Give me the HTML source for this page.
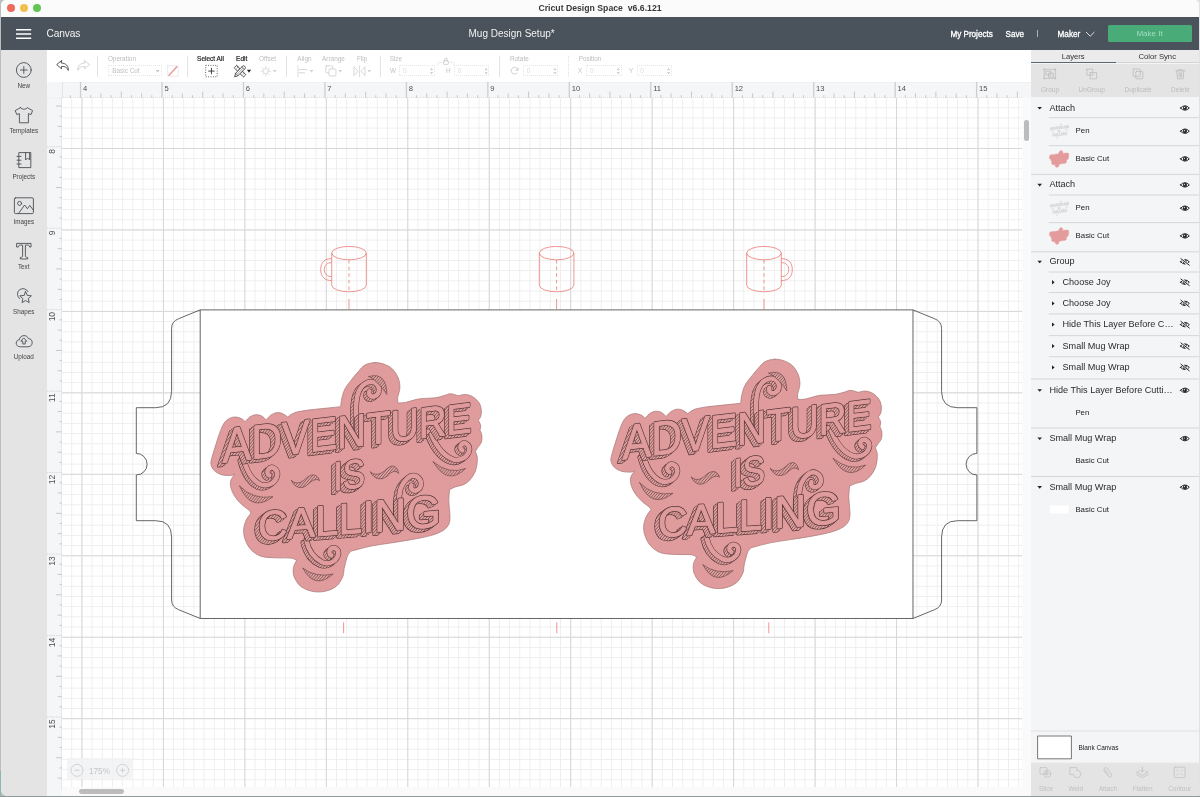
<!DOCTYPE html>
<html lang="en">
<head>
<meta charset="utf-8">
<title>Cricut Design Space v6.6.121</title>
<style>
*{box-sizing:border-box;margin:0;padding:0}
html,body{width:1200px;height:797px;overflow:hidden}
body{background:linear-gradient(to right,#bdbdbd 0,#bdbdbd 600px,#e2e2e2 600px);font-family:"Liberation Sans",sans-serif;position:relative;color:#333}
#win{will-change:transform;position:absolute;left:1px;top:0;width:1198px;height:796px;background:#fff;border-radius:5px 5px 7px 7px;overflow:hidden}
#win *{position:absolute}
.abs{position:absolute}
#titlebar{left:0;top:0;width:1198px;height:17px;background:#fbfbfb}
#titlebar .t{left:0;width:1198px;top:3px;text-align:center;font-size:8.7px;font-weight:bold;color:#3a3a3a;letter-spacing:0;white-space:pre}
.tl{width:8.2px;height:8.2px;border-radius:50%;top:4.1px}
#header{left:0;top:17px;width:1198px;height:32.6px;background:#4a535b}
#header .hx{color:#fff;white-space:nowrap}
#sidebar{left:0;top:49.6px;width:45.5px;height:747px;background:#e4e4e4}
.sbl{left:0;width:45.5px;text-align:center;font-size:6.3px;color:#444;white-space:nowrap}
#toolbar{left:45.5px;top:49.6px;width:985px;height:32.2px;background:#fff}
.tbl{font-size:6.4px;color:#bdbdbd;white-space:nowrap;top:5.4px}
.tbl.dk{color:#222;font-size:6.5px;-webkit-text-stroke:0.2px #222}
.div{width:1px;background:#e3e3e3;top:6px;height:21px}
.inp{height:10.5px;top:15.8px;border:1px dotted #e6e6e6;border-radius:1px}
.sm{font-size:6.4px;color:#c4c4c4;white-space:nowrap}
</style>
</head>
<body>
<div id="win">
<div id="titlebar">
  <div class="tl" style="left:5.5px;background:#ec6a5e"></div>
  <div class="tl" style="left:18.5px;background:#f4bf4f"></div>
  <div class="tl" style="left:31.5px;background:#61c554"></div>
  <div class="t">Cricut Design Space  v6.6.121</div>
</div>
<div id="header">
  <svg style="left:15px;top:11px" width="16" height="12" viewBox="0 0 16 12"><path d="M0 1.8H15.2M0 6H15.2M0 10.2H15.2" stroke="#fff" stroke-width="1.4" fill="none"/></svg>
  <div class="hx" style="left:45.6px;top:11.1px;font-size:10.2px;opacity:.92;letter-spacing:-0.15px">Canvas</div>
  <div class="hx" style="left:467.5px;top:11.3px;font-size:10px;opacity:.92">Mug Design Setup*</div>
  <div class="hx" style="left:949.4px;top:13.2px;font-size:8.15px;line-height:9px;-webkit-text-stroke:0.3px #fff">My Projects</div>
  <div class="hx" style="left:1004.6px;top:13.2px;font-size:8.15px;line-height:9px;-webkit-text-stroke:0.3px #fff">Save</div>
  <div class="hx" style="left:1035.6px;top:11px;font-size:8px;opacity:.8">|</div>
  <div class="hx" style="left:1056.6px;top:13.2px;font-size:8.15px;line-height:9px;-webkit-text-stroke:0.3px #fff">Maker</div>
  <svg style="left:1084px;top:14px" width="11" height="7" viewBox="0 0 11 7"><path d="M1 1L5.2 5.2L9.4 1" stroke="#fff" stroke-width="0.9" fill="none" opacity=".9"/></svg>
  <div style="left:1106.5px;top:8px;width:84px;height:16.6px;background:#48ab78;border-radius:1.5px"></div>
  <div class="hx" style="left:1106.5px;top:11.6px;width:84px;text-align:center;font-size:8px;color:#a5dcc0">Make It</div>
</div>
<div id="sidebar">
  <svg style="left:0;top:0" width="46" height="320" viewBox="0 49.6 46 320" fill="none" stroke="#4a4f55" stroke-width="0.9" stroke-linejoin="round" stroke-linecap="round">
    <!-- New -->
    <circle cx="22.8" cy="69.6" r="7.4"/>
    <path d="M19.4 69.6H26.2M22.8 66.2V73"/>
    <!-- Templates (t-shirt) -->
    <path d="M19.6 107.2 L14.2 110.2 L15.8 114.2 L18.4 113.2 L18.4 122.4 L27.4 122.4 L27.4 113.2 L30 114.2 L31.6 110.2 L26.2 107.2 C25.4 109.4 20.4 109.4 19.6 107.2Z"/>
    <!-- Projects (notebook) -->
    <path d="M18.2 152.2H29.8V167.2H18.2Z"/>
    <path d="M16 156H20M16 159.8H20M16 163.6H20"/>
    <path d="M24.6 152.2V159.6L26.6 157.6L28.6 159.6V152.2"/>
    <!-- Images -->
    <rect x="13.4" y="197.4" width="19" height="15.8" rx="1.2"/>
    <circle cx="18.6" cy="203" r="2"/>
    <path d="M17.6 213 L23.6 204.6 L26.4 208.4 L28.8 205 L32.2 209.6"/>
    <!-- Text -->
    <path d="M16 243 H30 V246.6 H28.6 C28.4 245.2 27.8 244.6 26.4 244.6 H24.4 V255.4 C24.4 256.6 25 257 26.6 257 V258.6 H19.4 V257 C21 257 21.6 256.6 21.6 255.4 V244.6 H19.6 C18.2 244.6 17.6 245.2 17.4 246.6 H16Z"/>
    <!-- Shapes -->
    <path d="M18.6 298.2 A5.6 5.6 0 1 1 27 291.2"/>
    <path d="M24.6 291.2 L26.3 295 L30.4 295.4 L27.3 298.2 L28.2 302.2 L24.6 300.1 L21 302.2 L21.9 298.2 L18.8 295.4 L22.9 295Z"/>
    <!-- Upload -->
    <path d="M19.2 346.4 C16.6 346.4 15.2 344.8 15.2 342.8 C15.2 340.8 16.6 339.4 18.4 339.4 C18.6 336.8 20.6 335.2 23 335.2 C25.2 335.2 26.8 336.4 27.4 338.2 C29.6 338.2 31.2 339.8 31.2 342.2 C31.2 344.6 29.6 346.4 27.4 346.4Z"/>
    <path d="M23 337.8 L25.8 340.8 H24.2 V343.6 H21.8 V340.8 H20.2Z"/>
  </svg>
  <div class="sbl" style="top:32.7px">New</div>
  <div class="sbl" style="top:77.9px">Templates</div>
  <div class="sbl" style="top:123.1px">Projects</div>
  <div class="sbl" style="top:168.3px">Images</div>
  <div class="sbl" style="top:213.5px">Text</div>
  <div class="sbl" style="top:258.7px">Shapes</div>
  <div class="sbl" style="top:303.9px">Upload</div>
</div>
<div id="toolbar">
  <!-- coordinates inside toolbar: x = page-46.5, y = page-49.6 -->
  <svg style="left:0;top:0" width="985" height="32.2" viewBox="46.5 49.6 985 32.2" fill="none" stroke-linejoin="round" stroke-linecap="round">
    <!-- undo -->
    <path d="M60.8 60.2 L56 64.2 L60.8 68.4 V66 C64.2 65.8 66.4 67 67.6 70 C68 65.8 65.4 62.8 60.8 62.6Z" stroke="#444" stroke-width="0.9"/>
    <!-- redo -->
    <path d="M84 60.2 L88.8 64.2 L84 68.4 V66 C80.6 65.8 78.4 67 77.2 70 C76.8 65.8 79.4 62.8 84 62.6Z" stroke="#cdcdcd" stroke-width="0.9"/>
    <!-- swatch -->
    <rect x="167" y="65.4" width="10.6" height="10.4" stroke="#e2e2e2" stroke-width="0.8" stroke-dasharray="1 1"/>
    <path d="M168.4 74.8 L176.2 66.4" stroke="#ee9c9c" stroke-width="1.6"/>
    <!-- select all -->
    <rect x="205" y="65" width="11.6" height="11.4" stroke="#4a4a4a" stroke-width="0.9" stroke-dasharray="0.9 1.5" stroke-linecap="butt"/>
    <path d="M208 70.7H213.6M210.8 67.9V73.5" stroke="#333" stroke-width="0.9"/>
    <!-- edit (pencil + ruler crossed) -->
    <g stroke="#333" stroke-width="0.8" fill="#fff">
      <g transform="translate(239.4 70.8) rotate(45)"><rect x="-6.6" y="-1.7" width="13.2" height="3.4" rx="0.6"/><path d="M-4.4 -1.7V0M-2.2 -1.7V0M0 -1.7V0M2.2 -1.7V0M4.4 -1.7V0" stroke-width="0.5"/></g>
      <g transform="translate(239.4 70.8) rotate(-45)"><path d="M-7.4 0 L-4.6 -1.7 H5.4 Q6.8 -1.7 6.8 0 Q6.8 1.7 5.4 1.7 H-4.6Z"/><path d="M-4.6 -1.7V1.7M4.4 -1.7V1.7" stroke-width="0.5"/><path d="M-4.6 0H4.4" stroke-width="0.45"/></g>
    </g>
    <path d="M246.3 69.4 H250.5 L248.4 72.4Z" fill="#222" stroke="none"/>
    <!-- offset -->
    <g stroke="#d2d2d2" stroke-width="0.8">
      <circle cx="265.2" cy="70.8" r="2.6"/>
      <path d="M265.2 66V67.2M265.2 74.4V75.6M260.4 70.8H261.6M268.8 70.8H270M261.8 67.4L262.6 68.2M267.8 73.4L268.6 74.2M261.8 74.2L262.6 73.4M267.8 68.2L268.6 67.4" />
    </g>
    <path d="M272.4 69.6 H276 L274.2 72.2Z" fill="#d0d0d0"/>
    <!-- align -->
    <g stroke="#d4d4d4" stroke-width="0.9">
      <path d="M297.4 65.4V76.2" stroke-dasharray="1 1"/>
      <path d="M298.6 69.2H306.4M298.6 72.4H304"/>
    </g>
    <path d="M309.2 69.6 H312.8 L311 72.2Z" fill="#d0d0d0"/>
    <!-- arrange -->
    <g stroke="#d4d4d4" stroke-width="0.9">
      <rect x="325.2" y="65.4" width="7" height="7" rx="1"/>
      <rect x="328.4" y="68.6" width="7" height="7" rx="1" fill="#fff"/>
    </g>
    <path d="M337.8 69.6 H341.4 L339.6 72.2Z" fill="#d0d0d0"/>
    <!-- flip -->
    <g stroke="#d4d4d4" stroke-width="0.9">
      <path d="M353.6 66.6 L357.4 70.8 L353.6 75Z"/>
      <path d="M364.2 66.6 L360.4 70.8 L364.2 75Z"/>
      <path d="M358.9 65.4V76.2" stroke-dasharray="1 1"/>
    </g>
    <path d="M366.9 69.6 H370.5 L368.7 72.2Z" fill="#d0d0d0"/>
    <!-- lock -->
    <g stroke="#c4c4c4" stroke-width="0.8">
      <rect x="443" y="60.4" width="4.8" height="3.6" rx="0.8"/>
      <path d="M444 60.4 V59.2 A1.4 1.4 0 0 1 446.8 59.2 V60.4"/>
      <path d="M437.4 64.6 V63 Q437.4 62 438.4 62 H441.2M449.6 62 H452.4 Q453.4 62 453.4 63 V64.6" stroke="#e4e4e4"/>
    </g>
    <!-- rotate -->
    <path d="M516.6 72.6 A3.4 3.4 0 1 1 517.4 69.6 M517.6 67.6 V69.8 H515.4" stroke="#c9c9c9" stroke-width="0.9"/>
    <!-- spinners -->
    <g fill="#cfcfcf" stroke="none">
      <path d="M429.4 69.8H432.6L431 67.4ZM429.4 71.6H432.6L431 74Z"/>
      <path d="M484 69.8H487.2L485.6 67.4ZM484 71.6H487.2L485.6 74Z"/>
      <path d="M552.9 69.8H556.1L554.5 67.4ZM552.9 71.6H556.1L554.5 74Z"/>
      <path d="M616.2 69.8H619.4L617.8 67.4ZM616.2 71.6H619.4L617.8 74Z"/>
      <path d="M666.6 69.8H669.8L668.2 67.4ZM666.6 71.6H669.8L668.2 74Z"/>
      <path d="M155.2 69.6H158.8L157 72.2Z" fill="#c4c4c4"/>
    </g>
  </svg>
  <div class="div" style="left:50.7px"></div>
  <div class="div" style="left:140.6px"></div>
  <div class="div" style="left:239px"></div>
  <div class="div" style="left:333.4px"></div>
  <div class="div" style="left:452.6px"></div>
  <div class="div" style="left:521.4px;background:none;border-left:1px dotted #e0e0e0"></div>
  <div class="tbl" style="left:61.4px">Operation</div>
  <div class="inp" style="left:61.4px;width:53.8px"></div>
  <div class="sm" style="left:65.8px;top:17.4px;color:#c2c2c2">Basic Cut</div>
  <div class="tbl dk" style="left:150.6px">Select All</div>
  <div class="tbl dk" style="left:189.6px">Edit</div>
  <div class="tbl" style="left:212.6px">Offset</div>
  <div class="tbl" style="left:250.8px">Align</div>
  <div class="tbl" style="left:275.6px">Arrange</div>
  <div class="tbl" style="left:310.4px">Flip</div>
  <div class="tbl" style="left:343.2px">Size</div>
  <div class="sm" style="left:343.4px;top:17.4px">W</div>
  <div class="inp" style="left:352.6px;width:36px"></div>
  <div class="sm" style="left:356.4px;top:17.4px;color:#dcdcdc">0</div>
  <div class="sm" style="left:399.6px;top:17.4px">H</div>
  <div class="inp" style="left:407.4px;width:35.6px"></div>
  <div class="sm" style="left:411.2px;top:17.4px;color:#dcdcdc">0</div>
  <div class="tbl" style="left:463.4px">Rotate</div>
  <div class="inp" style="left:476.4px;width:35.6px"></div>
  <div class="sm" style="left:480.2px;top:17.4px;color:#dcdcdc">0</div>
  <div class="tbl" style="left:532.2px">Position</div>
  <div class="sm" style="left:531.6px;top:17.4px">X</div>
  <div class="inp" style="left:539.8px;width:35.4px"></div>
  <div class="sm" style="left:543.6px;top:17.4px;color:#dcdcdc">0</div>
  <div class="sm" style="left:582.6px;top:17.4px">Y</div>
  <div class="inp" style="left:590px;width:35.6px"></div>
  <div class="sm" style="left:593.8px;top:17.4px;color:#dcdcdc">0</div>
</div>
<svg id="rulers" style="left:45.5px;top:81.8px" width="985" height="747" viewBox="46.5 81.8 985 747" fill="none">
<rect x="46.5" y="81.8" width="985" height="15.8" fill="#f5f6f8"/>
<rect x="46.5" y="81.8" width="15.1" height="720" fill="#f5f6f8"/>
<path d="M46.5 82.1H1031" stroke="#e3e3e3" stroke-width="0.7" stroke-dasharray="1 1"/>
<path d="M69.87 97.6V95.00M90.23 97.6V95.00M100.41 97.6V93.20M110.60 97.6V95.00M120.78 97.6V91.40M130.96 97.6V95.00M141.14 97.6V93.20M151.33 97.6V95.00M171.69 97.6V95.00M181.88 97.6V93.20M192.06 97.6V95.00M202.24 97.6V91.40M212.42 97.6V95.00M222.60 97.6V93.20M232.79 97.6V95.00M253.15 97.6V95.00M263.33 97.6V93.20M273.52 97.6V95.00M283.70 97.6V91.40M293.88 97.6V95.00M304.06 97.6V93.20M314.25 97.6V95.00M334.61 97.6V95.00M344.80 97.6V93.20M354.98 97.6V95.00M365.16 97.6V91.40M375.34 97.6V95.00M385.52 97.6V93.20M395.71 97.6V95.00M416.07 97.6V95.00M426.25 97.6V93.20M436.44 97.6V95.00M446.62 97.6V91.40M456.80 97.6V95.00M466.98 97.6V93.20M477.17 97.6V95.00M497.53 97.6V95.00M507.71 97.6V93.20M517.90 97.6V95.00M528.08 97.6V91.40M538.26 97.6V95.00M548.44 97.6V93.20M558.63 97.6V95.00M578.99 97.6V95.00M589.17 97.6V93.20M599.36 97.6V95.00M609.54 97.6V91.40M619.72 97.6V95.00M629.90 97.6V93.20M640.09 97.6V95.00M660.45 97.6V95.00M670.63 97.6V93.20M680.82 97.6V95.00M691.00 97.6V91.40M701.18 97.6V95.00M711.36 97.6V93.20M721.55 97.6V95.00M741.91 97.6V95.00M752.09 97.6V93.20M762.28 97.6V95.00M772.46 97.6V91.40M782.64 97.6V95.00M792.82 97.6V93.20M803.01 97.6V95.00M823.37 97.6V95.00M833.55 97.6V93.20M843.74 97.6V95.00M853.92 97.6V91.40M864.10 97.6V95.00M874.28 97.6V93.20M884.47 97.6V95.00M904.83 97.6V95.00M915.01 97.6V93.20M925.20 97.6V95.00M935.38 97.6V91.40M945.56 97.6V95.00M955.74 97.6V93.20M965.93 97.6V95.00M986.29 97.6V95.00M996.47 97.6V93.20M1006.66 97.6V95.00M1016.84 97.6V91.40" stroke="#b4b4b4" stroke-width="0.7"/>
<path d="M80.05 81.8V97.6M161.51 81.8V97.6M242.97 81.8V97.6M324.43 81.8V97.6M405.89 81.8V97.6M487.35 81.8V97.6M568.81 81.8V97.6M650.27 81.8V97.6M731.73 81.8V97.6M813.19 81.8V97.6M894.65 81.8V97.6M976.11 81.8V97.6" stroke="#cecece" stroke-width="1.3"/>
<path d="M61.6 105.85H55.40M61.6 116.03H59.00M61.6 126.22H57.20M61.6 136.40H59.00M61.6 156.76H59.00M61.6 166.95H57.20M61.6 177.13H59.00M61.6 187.31H55.40M61.6 197.49H59.00M61.6 207.68H57.20M61.6 217.86H59.00M61.6 238.22H59.00M61.6 248.41H57.20M61.6 258.59H59.00M61.6 268.77H55.40M61.6 278.95H59.00M61.6 289.13H57.20M61.6 299.32H59.00M61.6 319.68H59.00M61.6 329.87H57.20M61.6 340.05H59.00M61.6 350.23H55.40M61.6 360.41H59.00M61.6 370.60H57.20M61.6 380.78H59.00M61.6 401.14H59.00M61.6 411.32H57.20M61.6 421.51H59.00M61.6 431.69H55.40M61.6 441.87H59.00M61.6 452.05H57.20M61.6 462.24H59.00M61.6 482.60H59.00M61.6 492.78H57.20M61.6 502.97H59.00M61.6 513.15H55.40M61.6 523.33H59.00M61.6 533.51H57.20M61.6 543.70H59.00M61.6 564.06H59.00M61.6 574.25H57.20M61.6 584.43H59.00M61.6 594.61H55.40M61.6 604.79H59.00M61.6 614.97H57.20M61.6 625.16H59.00M61.6 645.52H59.00M61.6 655.70H57.20M61.6 665.89H59.00M61.6 676.07H55.40M61.6 686.25H59.00M61.6 696.43H57.20M61.6 706.62H59.00M61.6 726.98H59.00M61.6 737.16H57.20M61.6 747.35H59.00M61.6 757.53H55.40M61.6 767.71H59.00M61.6 777.89H57.20" stroke="#b4b4b4" stroke-width="0.7"/>
<path d="M46.5 146.58H61.6M46.5 228.04H61.6M46.5 309.50H61.6M46.5 390.96H61.6M46.5 472.42H61.6M46.5 553.88H61.6M46.5 635.34H61.6M46.5 716.80H61.6" stroke="#d8d8d8" stroke-width="1" stroke-dasharray="1.4 0.8"/>
<path d="M61.6 82V790" stroke="#cfcfcf" stroke-width="0.9"/>
<path d="M46.5 97.6H1022" stroke="#d0d0d0" stroke-width="0.8" stroke-dasharray="1 1"/>
<rect x="46.5" y="81.8" width="15.1" height="15.8" fill="#f5f6f8"/>
<g font-family="Liberation Sans, sans-serif" font-size="7.6" fill="#4f4f4f">
<text x="82.45" y="91.2">4</text>
<text x="163.91" y="91.2">5</text>
<text x="245.37" y="91.2">6</text>
<text x="326.83" y="91.2">7</text>
<text x="408.29" y="91.2">8</text>
<text x="489.75" y="91.2">9</text>
<text x="571.21" y="91.2">10</text>
<text x="652.67" y="91.2">11</text>
<text x="734.13" y="91.2">12</text>
<text x="815.59" y="91.2">13</text>
<text x="897.05" y="91.2">14</text>
<text x="978.51" y="91.2">15</text>
<text transform="translate(54.3 148.78) rotate(-90)" text-anchor="end" font-size="8.5">8</text>
<text transform="translate(54.3 230.24) rotate(-90)" text-anchor="end" font-size="8.5">9</text>
<text transform="translate(54.3 311.70) rotate(-90)" text-anchor="end" font-size="8.5">10</text>
<text transform="translate(54.3 393.16) rotate(-90)" text-anchor="end" font-size="8.5">11</text>
<text transform="translate(54.3 474.62) rotate(-90)" text-anchor="end" font-size="8.5">12</text>
<text transform="translate(54.3 556.08) rotate(-90)" text-anchor="end" font-size="8.5">13</text>
<text transform="translate(54.3 637.54) rotate(-90)" text-anchor="end" font-size="8.5">14</text>
<text transform="translate(54.3 719.00) rotate(-90)" text-anchor="end" font-size="8.5">15</text>
</g>
</svg>
<div id="canvas" style="left:60.6px;top:97.6px;width:960.1px;height:689.6px;overflow:hidden;background:#fff">
<svg style="left:0;top:0" width="960.1" height="689.6" viewBox="61.6 97.6 960.1 689.6" fill="none">
<defs>
<pattern id="gmin" x="81.05" y="310.5" width="10.1825" height="10.1825" patternUnits="userSpaceOnUse"><path d="M0.5 0V10.182M0 0.5H10.182" stroke="#ededee" stroke-width="0.9"/></pattern>
<pattern id="gmaj" x="81.05" y="310.5" width="81.4600" height="81.4600" patternUnits="userSpaceOnUse"><path d="M0.5 0V81.460M0 0.5H81.460" stroke="#d7d7d9" stroke-width="1"/></pattern>
<pattern id="hatch" width="2.2" height="2.2" patternUnits="userSpaceOnUse" patternTransform="rotate(-50)"><rect width="2.2" height="2.2" fill="#dfa0a0"/><path d="M0 1.1H2.2" stroke="#6b4444" stroke-width="0.55"/></pattern>
</defs>
<rect x="61.6" y="97.6" width="960.1" height="689.6" fill="url(#gmin)"/>
<rect x="61.6" y="97.6" width="960.1" height="689.6" fill="url(#gmaj)"/>
<rect x="199.8" y="309.5" width="712.8" height="308.6" fill="#fff"/>
<g stroke="#4a4a4a" stroke-width="0.85" fill="none" stroke-linejoin="round">
<path d="M199.80 309.50L178.30 318.30Q171.20 321.00 171.20 328.00L171.20 391.00Q171.20 407.30 155.30 407.30L135.90 407.30L135.90 453.00A10.8 10.8 0 0 1 135.90 474.60L135.90 520.30L155.30 520.30Q171.20 520.30 171.20 536.60L171.20 599.60Q171.20 606.60 178.30 609.30L199.80 618.10"/><path d="M912.60 309.50L934.10 318.30Q941.20 321.00 941.20 328.00L941.20 391.00Q941.20 407.30 957.10 407.30L976.50 407.30L976.50 453.00A10.8 10.8 0 0 0 976.50 474.60L976.50 520.30L957.10 520.30Q941.20 520.30 941.20 536.60L941.20 599.60Q941.20 606.60 934.10 609.30L912.60 618.10"/>
<rect x="199.8" y="309.5" width="712.8" height="308.6"/>
</g>
<g stroke="#ea746d" stroke-width="0.75" fill="none">
<ellipse cx="348.60" cy="252.7" rx="17.3" ry="6.7"/>
<path d="M331.30 252.7V284.7A17.3 6.7 0 0 0 365.90 284.7V252.7"/>
<path d="M348.60 259.6V291.4" stroke-dasharray="3.6 3"/>
<path d="M348.60 298.6V309"/>
<path d="M343.20 622V632.8"/>
<path d="M331.30 258.2C324.30 258.2 320.30 262 320.30 269.2C320.30 276.4 324.30 280.2 331.30 280.2"/>
<path d="M331.30 262.2C326.70 262.2 323.90 265 323.90 269.2C323.90 273.4 326.70 276.2 331.30 276.2"/>
<ellipse cx="556.20" cy="252.7" rx="17.3" ry="6.7"/>
<path d="M538.90 252.7V284.7A17.3 6.7 0 0 0 573.50 284.7V252.7"/>
<path d="M556.20 259.6V291.4" stroke-dasharray="3.6 3"/>
<path d="M556.20 298.6V309"/>
<path d="M556.40 622V632.8"/>
<ellipse cx="763.60" cy="252.7" rx="17.3" ry="6.7"/>
<path d="M746.30 252.7V284.7A17.3 6.7 0 0 0 780.90 284.7V252.7"/>
<path d="M763.60 259.6V291.4" stroke-dasharray="3.6 3"/>
<path d="M763.60 298.6V309"/>
<path d="M768.40 622V632.8"/>
<path d="M780.90 258.2C787.90 258.2 791.90 262 791.90 269.2C791.90 276.4 787.90 280.2 780.90 280.2"/>
<path d="M780.90 262.2C785.50 262.2 788.30 265 788.30 269.2C788.30 273.4 785.50 276.2 780.90 276.2"/>
</g>
<defs><mask id="ml1" maskUnits="userSpaceOnUse" x="200" y="350" width="300" height="250"><g transform="matrix(0.8887 -0.1097 0 1.0000 222.00 462.40)" fill="#fff" stroke="#fff" stroke-width="1.00" stroke-linejoin="round" font-family="Liberation Sans, sans-serif" font-size="48.5"><text x="-0.71" y="0.41"><tspan font-size="48.5">A</tspan><tspan font-size="47.8">D</tspan><tspan font-size="47.0">V</tspan><tspan font-size="46.2">E</tspan><tspan font-size="45.5">N</tspan><tspan font-size="44.8">T</tspan><tspan font-size="44.0">U</tspan><tspan font-size="43.2">R</tspan><tspan font-size="42.5">E</tspan></text><text x="-1.41" y="0.82"><tspan font-size="48.5">A</tspan><tspan font-size="47.8">D</tspan><tspan font-size="47.0">V</tspan><tspan font-size="46.2">E</tspan><tspan font-size="45.5">N</tspan><tspan font-size="44.8">T</tspan><tspan font-size="44.0">U</tspan><tspan font-size="43.2">R</tspan><tspan font-size="42.5">E</tspan></text><text x="-2.12" y="1.22"><tspan font-size="48.5">A</tspan><tspan font-size="47.8">D</tspan><tspan font-size="47.0">V</tspan><tspan font-size="46.2">E</tspan><tspan font-size="45.5">N</tspan><tspan font-size="44.8">T</tspan><tspan font-size="44.0">U</tspan><tspan font-size="43.2">R</tspan><tspan font-size="42.5">E</tspan></text><text x="-2.83" y="1.63"><tspan font-size="48.5">A</tspan><tspan font-size="47.8">D</tspan><tspan font-size="47.0">V</tspan><tspan font-size="46.2">E</tspan><tspan font-size="45.5">N</tspan><tspan font-size="44.8">T</tspan><tspan font-size="44.0">U</tspan><tspan font-size="43.2">R</tspan><tspan font-size="42.5">E</tspan></text><text x="-3.54" y="2.04"><tspan font-size="48.5">A</tspan><tspan font-size="47.8">D</tspan><tspan font-size="47.0">V</tspan><tspan font-size="46.2">E</tspan><tspan font-size="45.5">N</tspan><tspan font-size="44.8">T</tspan><tspan font-size="44.0">U</tspan><tspan font-size="43.2">R</tspan><tspan font-size="42.5">E</tspan></text><text x="-4.24" y="2.45"><tspan font-size="48.5">A</tspan><tspan font-size="47.8">D</tspan><tspan font-size="47.0">V</tspan><tspan font-size="46.2">E</tspan><tspan font-size="45.5">N</tspan><tspan font-size="44.8">T</tspan><tspan font-size="44.0">U</tspan><tspan font-size="43.2">R</tspan><tspan font-size="42.5">E</tspan></text><text x="-4.95" y="2.86"><tspan font-size="48.5">A</tspan><tspan font-size="47.8">D</tspan><tspan font-size="47.0">V</tspan><tspan font-size="46.2">E</tspan><tspan font-size="45.5">N</tspan><tspan font-size="44.8">T</tspan><tspan font-size="44.0">U</tspan><tspan font-size="43.2">R</tspan><tspan font-size="42.5">E</tspan></text></g></mask><mask id="ml2" maskUnits="userSpaceOnUse" x="200" y="350" width="300" height="250"><g transform="matrix(0.8258 -0.1045 0 1.0000 333.00 490.40)" fill="#fff" stroke="#fff" stroke-width="1.00" stroke-linejoin="round" font-family="Liberation Sans, sans-serif" font-size="40.5"><text x="-0.76" y="0.41">IS</text><text x="-1.52" y="0.81">IS</text><text x="-2.28" y="1.22">IS</text><text x="-3.04" y="1.62">IS</text><text x="-3.81" y="2.03">IS</text><text x="-4.57" y="2.44">IS</text><text x="-5.33" y="2.84">IS</text></g></mask><mask id="ml3" maskUnits="userSpaceOnUse" x="200" y="350" width="300" height="250"><g transform="matrix(0.9834 -0.0773 0 1.0000 257.50 540.40)" fill="#fff" stroke="#fff" stroke-width="1.00" stroke-linejoin="round" font-family="Liberation Sans, sans-serif" font-size="41.5"><text x="-0.64" y="0.44"><tspan font-size="41.5">C</tspan><tspan font-size="42.2">A</tspan><tspan font-size="42.8">L</tspan><tspan font-size="43.5">L</tspan><tspan font-size="44.2">I</tspan><tspan font-size="44.8">N</tspan><tspan font-size="45.5">G</tspan></text><text x="-1.28" y="0.87"><tspan font-size="41.5">C</tspan><tspan font-size="42.2">A</tspan><tspan font-size="42.8">L</tspan><tspan font-size="43.5">L</tspan><tspan font-size="44.2">I</tspan><tspan font-size="44.8">N</tspan><tspan font-size="45.5">G</tspan></text><text x="-1.92" y="1.31"><tspan font-size="41.5">C</tspan><tspan font-size="42.2">A</tspan><tspan font-size="42.8">L</tspan><tspan font-size="43.5">L</tspan><tspan font-size="44.2">I</tspan><tspan font-size="44.8">N</tspan><tspan font-size="45.5">G</tspan></text><text x="-2.56" y="1.75"><tspan font-size="41.5">C</tspan><tspan font-size="42.2">A</tspan><tspan font-size="42.8">L</tspan><tspan font-size="43.5">L</tspan><tspan font-size="44.2">I</tspan><tspan font-size="44.8">N</tspan><tspan font-size="45.5">G</tspan></text><text x="-3.20" y="2.18"><tspan font-size="41.5">C</tspan><tspan font-size="42.2">A</tspan><tspan font-size="42.8">L</tspan><tspan font-size="43.5">L</tspan><tspan font-size="44.2">I</tspan><tspan font-size="44.8">N</tspan><tspan font-size="45.5">G</tspan></text><text x="-3.84" y="2.62"><tspan font-size="41.5">C</tspan><tspan font-size="42.2">A</tspan><tspan font-size="42.8">L</tspan><tspan font-size="43.5">L</tspan><tspan font-size="44.2">I</tspan><tspan font-size="44.8">N</tspan><tspan font-size="45.5">G</tspan></text><text x="-4.47" y="3.05"><tspan font-size="41.5">C</tspan><tspan font-size="42.2">A</tspan><tspan font-size="42.8">L</tspan><tspan font-size="43.5">L</tspan><tspan font-size="44.2">I</tspan><tspan font-size="44.8">N</tspan><tspan font-size="45.5">G</tspan></text></g></mask></defs>
<g transform="translate(0 0)" fill="none" stroke-linecap="round" stroke-linejoin="round">
<path d="M374.3 362.2C377.6 362.1 381.0 362.8 384.0 363.9C387.0 365.0 389.9 366.6 392.2 368.8C394.5 371.1 396.7 374.6 397.9 377.7C399.1 380.8 399.6 384.2 399.5 387.5C399.4 390.8 397.5 395.0 397.2 397.5C397.0 399.2 397.5 400.9 397.6 402.6C400.1 402.4 402.7 402.5 405.2 402.0C407.8 401.5 410.9 400.3 413.4 399.7C415.6 399.2 417.8 398.5 420.0 398.3C423.6 397.9 431.1 397.8 435.1 397.3C438.2 396.9 441.6 395.8 444.1 395.1C446.1 394.6 448.0 393.3 450.1 393.3C452.4 393.3 455.2 394.6 457.7 395.3C460.2 394.9 462.7 393.9 465.2 394.1C467.7 394.3 470.5 395.2 472.7 396.6C475.0 398.0 477.4 400.4 478.8 402.6C480.2 404.8 480.8 407.8 481.0 410.1C481.2 412.1 480.8 414.6 480.3 416.2C479.9 417.6 478.8 418.7 478.0 419.9C478.8 421.7 480.1 423.6 480.3 425.2C480.5 426.7 479.8 428.2 479.5 429.7C480.2 431.5 481.3 433.1 481.5 435.0C481.8 437.0 481.6 439.9 481.0 441.8C480.5 443.5 479.0 444.8 478.0 446.3C477.0 447.8 476.0 449.3 475.0 450.8C475.6 452.8 476.7 454.7 476.9 456.8C477.1 459.1 476.9 461.9 476.5 464.4C476.1 466.9 475.6 469.5 474.5 471.9C473.4 474.4 471.5 477.4 469.7 479.4C468.0 481.3 466.0 482.9 463.7 484.0C461.2 485.2 457.1 485.7 454.7 486.6C452.8 487.3 451.0 488.3 449.2 489.2C448.9 492.8 448.3 496.4 448.4 500.0C448.5 504.5 449.6 512.2 449.6 516.3C449.6 519.0 449.4 522.0 448.2 524.3C447.0 526.6 444.8 528.9 442.4 530.3C439.4 532.1 434.5 534.0 430.3 535.2C424.9 536.7 416.9 538.2 410.2 539.4C403.6 540.6 396.9 541.5 390.2 542.6C383.5 543.7 376.7 544.4 370.1 545.8C363.6 547.1 357.2 549.1 350.7 550.7C349.6 552.1 348.1 553.2 347.4 554.8C346.2 557.7 344.6 564.4 343.8 567.9C343.2 570.6 343.6 573.5 342.5 576.0C341.2 579.0 339.0 583.3 336.0 585.8C333.0 588.3 328.7 590.0 324.6 590.9C320.5 591.8 315.7 591.8 311.6 590.9C307.5 590.0 303.1 588.3 300.1 585.8C297.1 583.3 294.8 579.1 293.6 576.0C292.6 573.3 292.6 569.9 293.0 567.2C293.4 564.6 295.1 562.3 296.2 559.9C294.6 559.2 293.1 558.0 291.4 557.8C287.6 557.4 278.6 557.7 273.4 557.4C269.0 557.1 264.2 557.1 260.4 555.8C256.7 554.5 253.2 552.0 250.6 549.3C248.0 546.6 246.1 542.8 244.9 539.5C243.7 536.4 243.1 533.0 243.2 529.7C243.3 526.4 244.5 522.8 245.7 519.9C246.9 517.2 249.0 515.0 250.6 512.6C250.0 511.8 249.6 510.8 248.9 510.1C247.4 508.7 243.8 506.5 241.6 504.4C239.3 502.2 236.9 499.7 235.1 497.1C233.4 494.6 231.8 491.6 231.0 488.9C230.2 486.3 229.6 483.4 230.2 480.8C230.8 478.2 232.9 476.0 234.3 473.6C233.2 474.1 232.2 475.0 231.0 475.1C228.8 475.2 224.0 475.1 221.2 474.3C218.5 473.5 215.7 472.0 213.9 470.2C212.1 468.4 210.8 465.9 210.5 463.5C210.2 461.1 211.3 458.3 212.0 455.7C212.8 452.4 214.3 447.9 215.5 444.0C216.9 439.7 218.7 433.7 220.2 430.0C221.3 427.2 222.8 423.8 224.3 421.8C225.6 420.1 227.7 418.7 229.5 417.8C231.3 417.0 233.4 416.5 235.3 416.6C237.2 416.7 239.6 417.5 241.2 418.3C242.6 419.0 243.5 420.3 244.7 421.3C246.2 419.7 247.6 417.8 249.3 416.6C251.1 415.4 253.2 414.5 255.2 414.3C257.1 414.1 259.2 414.5 261.0 415.4C262.8 416.3 264.1 418.1 265.7 419.5C267.2 417.9 268.6 416.0 270.3 414.8C272.1 413.6 274.2 412.6 276.2 412.3C278.1 412.0 280.2 412.4 282.0 413.1C283.9 413.8 285.5 415.4 287.3 416.6C289.4 415.2 291.3 413.4 293.7 412.5C296.5 411.4 300.7 410.8 304.2 410.2C307.9 409.6 311.9 409.2 315.8 408.8C319.7 408.4 323.6 408.0 327.5 407.6C331.6 407.2 336.0 406.7 340.3 406.3C340.5 404.5 340.6 402.6 340.9 400.8C341.2 398.8 341.8 396.1 342.4 394.0C343.0 391.9 343.7 389.9 344.8 388.0C346.0 385.8 348.0 383.3 349.8 381.0C352.0 378.2 355.4 373.9 357.9 371.2C360.0 368.9 361.8 366.2 364.5 364.7C367.2 363.2 371.1 362.3 374.3 362.2Z" fill="#e09c9d" stroke="#a97476" stroke-width="0.7"/>
<g transform="translate(-3 2.4)"><path d="M356 432 C355 415 355 400 358 392 C361 384 368 380 374 382 C380 385 380 394 374 396 C370 397 368 394 369 391" stroke="#573638" stroke-width="5.7"/><path d="M356 432 C355 415 355 400 358 392 C361 384 368 380 374 382 C380 385 380 394 374 396 C370 397 368 394 369 391" stroke="url(#hatch)" stroke-width="4.6"/></g><path d="M356 432 C355 415 355 400 358 392 C361 384 368 380 374 382 C380 385 380 394 374 396 C370 397 368 394 369 391" stroke="#573638" stroke-width="5.7"/><path d="M356 432 C355 415 355 400 358 392 C361 384 368 380 374 382 C380 385 380 394 374 396 C370 397 368 394 369 391" stroke="#e09c9d" stroke-width="4.6"/>
<g transform="translate(-3 2.4)"><path d="M431 434 C436 446 444 456 453 459 C461 461 468 456 469 449 C469 444 464 441 461 444 C459 446 460 449 462 450" stroke="#573638" stroke-width="5.7"/><path d="M431 434 C436 446 444 456 453 459 C461 461 468 456 469 449 C469 444 464 441 461 444 C459 446 460 449 462 450" stroke="url(#hatch)" stroke-width="4.6"/></g><path d="M431 434 C436 446 444 456 453 459 C461 461 468 456 469 449 C469 444 464 441 461 444 C459 446 460 449 462 450" stroke="#573638" stroke-width="5.7"/><path d="M431 434 C436 446 444 456 453 459 C461 461 468 456 469 449 C469 444 464 441 461 444 C459 446 460 449 462 450" stroke="#e09c9d" stroke-width="4.6"/>
<g transform="translate(-3 2.4)"><path d="M243 458 C246 470 252 480 260 484 C268 487 276 482 277 474 C277 468 271 465 268 469 C266 471 267 474 269 475" stroke="#573638" stroke-width="5.7"/><path d="M243 458 C246 470 252 480 260 484 C268 487 276 482 277 474 C277 468 271 465 268 469 C266 471 267 474 269 475" stroke="url(#hatch)" stroke-width="4.6"/></g><path d="M243 458 C246 470 252 480 260 484 C268 487 276 482 277 474 C277 468 271 465 268 469 C266 471 267 474 269 475" stroke="#573638" stroke-width="5.7"/><path d="M243 458 C246 470 252 480 260 484 C268 487 276 482 277 474 C277 468 271 465 268 469 C266 471 267 474 269 475" stroke="#e09c9d" stroke-width="4.6"/>
<g transform="translate(-3 2.4)"><path d="M306 540 C308 550 314 558 322 562 C330 565 337 560 338 553 C338 548 333 546 330 549 C328 551 329 554 331 555" stroke="#573638" stroke-width="5.7"/><path d="M306 540 C308 550 314 558 322 562 C330 565 337 560 338 553 C338 548 333 546 330 549 C328 551 329 554 331 555" stroke="url(#hatch)" stroke-width="4.6"/></g><path d="M306 540 C308 550 314 558 322 562 C330 565 337 560 338 553 C338 548 333 546 330 549 C328 551 329 554 331 555" stroke="#573638" stroke-width="5.7"/><path d="M306 540 C308 550 314 558 322 562 C330 565 337 560 338 553 C338 548 333 546 330 549 C328 551 329 554 331 555" stroke="#e09c9d" stroke-width="4.6"/>
<g transform="translate(-3 2.4)"><path d="M399 521 C398 508 398 497 400 489 C403 480 410 473 416 476 C422 479 422 488 416 490 C412 491 410 488 411 485" stroke="#573638" stroke-width="5.7"/><path d="M399 521 C398 508 398 497 400 489 C403 480 410 473 416 476 C422 479 422 488 416 490 C412 491 410 488 411 485" stroke="url(#hatch)" stroke-width="4.6"/></g><path d="M399 521 C398 508 398 497 400 489 C403 480 410 473 416 476 C422 479 422 488 416 490 C412 491 410 488 411 485" stroke="#573638" stroke-width="5.7"/><path d="M399 521 C398 508 398 497 400 489 C403 480 410 473 416 476 C422 479 422 488 416 490 C412 491 410 488 411 485" stroke="#e09c9d" stroke-width="4.6"/>
<path d="M368.5 376.1 Q386.0 371.0 386.5 394.0 Q377.5 380.5 368.5 376.1Z" fill="url(#hatch)" stroke="#573638" stroke-width="0.55"/>
<path d="M432.8 461.4 Q447.0 486.0 465.2 468.1 Q448.4 474.6 432.8 461.4Z" fill="url(#hatch)" stroke="#573638" stroke-width="0.55"/>
<path d="M239.2 485.7 Q251.0 513.0 272.6 496.3 Q252.6 499.6 239.2 485.7Z" fill="url(#hatch)" stroke="#573638" stroke-width="0.55"/>
<path d="M302.6 567.9 Q314.0 590.0 332.8 573.6 Q315.6 577.6 302.6 567.9Z" fill="url(#hatch)" stroke="#573638" stroke-width="0.55"/>
<path d="M291 480.2 C296 484.4 300.6 482.6 305.6 478 C310.6 473.4 316.4 472.6 319.2 480.2 C315.4 477.6 311.4 480.4 307.4 484 C301.4 489.4 294.6 488 291 480.2Z" fill="url(#hatch)" stroke="#573638" stroke-width="0.55"/>
<path d="M370 471.6 C375 475.8 380.6 474 386 468.8 C391 464.2 396.4 463.8 398.2 473 C394.8 469.4 391.4 471.2 387.8 474.8 C381.4 480.8 373.8 479.4 370 471.6Z" fill="url(#hatch)" stroke="#573638" stroke-width="0.55"/>
<g transform="matrix(0.8887 -0.1097 0 1.0000 222.00 462.40)" font-family="Liberation Sans, sans-serif" font-size="48.5" stroke-linejoin="round"><text x="-4.95" y="2.86" fill="#573638" stroke="#573638" stroke-width="2.50"><tspan font-size="48.5">A</tspan><tspan font-size="47.8">D</tspan><tspan font-size="47.0">V</tspan><tspan font-size="46.2">E</tspan><tspan font-size="45.5">N</tspan><tspan font-size="44.8">T</tspan><tspan font-size="44.0">U</tspan><tspan font-size="43.2">R</tspan><tspan font-size="42.5">E</tspan></text><text x="-2.83" y="1.63" fill="#573638" stroke="#573638" stroke-width="2.50"><tspan font-size="48.5">A</tspan><tspan font-size="47.8">D</tspan><tspan font-size="47.0">V</tspan><tspan font-size="46.2">E</tspan><tspan font-size="45.5">N</tspan><tspan font-size="44.8">T</tspan><tspan font-size="44.0">U</tspan><tspan font-size="43.2">R</tspan><tspan font-size="42.5">E</tspan></text></g><rect x="200" y="350" width="300" height="250" fill="url(#hatch)" mask="url(#ml1)"/><g transform="matrix(0.8887 -0.1097 0 1.0000 222.00 462.40)" font-family="Liberation Sans, sans-serif" font-size="48.5" stroke-linejoin="round"><text x="0" y="0" fill="#573638" stroke="#573638" stroke-width="2.50"><tspan font-size="48.5">A</tspan><tspan font-size="47.8">D</tspan><tspan font-size="47.0">V</tspan><tspan font-size="46.2">E</tspan><tspan font-size="45.5">N</tspan><tspan font-size="44.8">T</tspan><tspan font-size="44.0">U</tspan><tspan font-size="43.2">R</tspan><tspan font-size="42.5">E</tspan></text><text x="0" y="0" fill="#e09c9d" stroke="#e09c9d" stroke-width="1.00"><tspan font-size="48.5">A</tspan><tspan font-size="47.8">D</tspan><tspan font-size="47.0">V</tspan><tspan font-size="46.2">E</tspan><tspan font-size="45.5">N</tspan><tspan font-size="44.8">T</tspan><tspan font-size="44.0">U</tspan><tspan font-size="43.2">R</tspan><tspan font-size="42.5">E</tspan></text></g>
<g transform="matrix(0.8258 -0.1045 0 1.0000 333.00 490.40)" font-family="Liberation Sans, sans-serif" font-size="40.5" stroke-linejoin="round"><text x="-5.33" y="2.84" fill="#573638" stroke="#573638" stroke-width="2.50">IS</text><text x="-3.04" y="1.62" fill="#573638" stroke="#573638" stroke-width="2.50">IS</text></g><rect x="200" y="350" width="300" height="250" fill="url(#hatch)" mask="url(#ml2)"/><g transform="matrix(0.8258 -0.1045 0 1.0000 333.00 490.40)" font-family="Liberation Sans, sans-serif" font-size="40.5" stroke-linejoin="round"><text x="0" y="0" fill="#573638" stroke="#573638" stroke-width="2.50">IS</text><text x="0" y="0" fill="#e09c9d" stroke="#e09c9d" stroke-width="1.00">IS</text></g>
<g transform="matrix(0.9834 -0.0773 0 1.0000 257.50 540.40)" font-family="Liberation Sans, sans-serif" font-size="41.5" stroke-linejoin="round"><text x="-4.47" y="3.05" fill="#573638" stroke="#573638" stroke-width="2.50"><tspan font-size="41.5">C</tspan><tspan font-size="42.2">A</tspan><tspan font-size="42.8">L</tspan><tspan font-size="43.5">L</tspan><tspan font-size="44.2">I</tspan><tspan font-size="44.8">N</tspan><tspan font-size="45.5">G</tspan></text><text x="-2.56" y="1.75" fill="#573638" stroke="#573638" stroke-width="2.50"><tspan font-size="41.5">C</tspan><tspan font-size="42.2">A</tspan><tspan font-size="42.8">L</tspan><tspan font-size="43.5">L</tspan><tspan font-size="44.2">I</tspan><tspan font-size="44.8">N</tspan><tspan font-size="45.5">G</tspan></text></g><rect x="200" y="350" width="300" height="250" fill="url(#hatch)" mask="url(#ml3)"/><g transform="matrix(0.9834 -0.0773 0 1.0000 257.50 540.40)" font-family="Liberation Sans, sans-serif" font-size="41.5" stroke-linejoin="round"><text x="0" y="0" fill="#573638" stroke="#573638" stroke-width="2.50"><tspan font-size="41.5">C</tspan><tspan font-size="42.2">A</tspan><tspan font-size="42.8">L</tspan><tspan font-size="43.5">L</tspan><tspan font-size="44.2">I</tspan><tspan font-size="44.8">N</tspan><tspan font-size="45.5">G</tspan></text><text x="0" y="0" fill="#e09c9d" stroke="#e09c9d" stroke-width="1.00"><tspan font-size="41.5">C</tspan><tspan font-size="42.2">A</tspan><tspan font-size="42.8">L</tspan><tspan font-size="43.5">L</tspan><tspan font-size="44.2">I</tspan><tspan font-size="44.8">N</tspan><tspan font-size="45.5">G</tspan></text></g>
</g>
<g transform="translate(400 -3.4)" fill="none" stroke-linecap="round" stroke-linejoin="round">
<path d="M374.3 362.2C377.6 362.1 381.0 362.8 384.0 363.9C387.0 365.0 389.9 366.6 392.2 368.8C394.5 371.1 396.7 374.6 397.9 377.7C399.1 380.8 399.6 384.2 399.5 387.5C399.4 390.8 397.5 395.0 397.2 397.5C397.0 399.2 397.5 400.9 397.6 402.6C400.1 402.4 402.7 402.5 405.2 402.0C407.8 401.5 410.9 400.3 413.4 399.7C415.6 399.2 417.8 398.5 420.0 398.3C423.6 397.9 431.1 397.8 435.1 397.3C438.2 396.9 441.6 395.8 444.1 395.1C446.1 394.6 448.0 393.3 450.1 393.3C452.4 393.3 455.2 394.6 457.7 395.3C460.2 394.9 462.7 393.9 465.2 394.1C467.7 394.3 470.5 395.2 472.7 396.6C475.0 398.0 477.4 400.4 478.8 402.6C480.2 404.8 480.8 407.8 481.0 410.1C481.2 412.1 480.8 414.6 480.3 416.2C479.9 417.6 478.8 418.7 478.0 419.9C478.8 421.7 480.1 423.6 480.3 425.2C480.5 426.7 479.8 428.2 479.5 429.7C480.2 431.5 481.3 433.1 481.5 435.0C481.8 437.0 481.6 439.9 481.0 441.8C480.5 443.5 479.0 444.8 478.0 446.3C477.0 447.8 476.0 449.3 475.0 450.8C475.6 452.8 476.7 454.7 476.9 456.8C477.1 459.1 476.9 461.9 476.5 464.4C476.1 466.9 475.6 469.5 474.5 471.9C473.4 474.4 471.5 477.4 469.7 479.4C468.0 481.3 466.0 482.9 463.7 484.0C461.2 485.2 457.1 485.7 454.7 486.6C452.8 487.3 451.0 488.3 449.2 489.2C448.9 492.8 448.3 496.4 448.4 500.0C448.5 504.5 449.6 512.2 449.6 516.3C449.6 519.0 449.4 522.0 448.2 524.3C447.0 526.6 444.8 528.9 442.4 530.3C439.4 532.1 434.5 534.0 430.3 535.2C424.9 536.7 416.9 538.2 410.2 539.4C403.6 540.6 396.9 541.5 390.2 542.6C383.5 543.7 376.7 544.4 370.1 545.8C363.6 547.1 357.2 549.1 350.7 550.7C349.6 552.1 348.1 553.2 347.4 554.8C346.2 557.7 344.6 564.4 343.8 567.9C343.2 570.6 343.6 573.5 342.5 576.0C341.2 579.0 339.0 583.3 336.0 585.8C333.0 588.3 328.7 590.0 324.6 590.9C320.5 591.8 315.7 591.8 311.6 590.9C307.5 590.0 303.1 588.3 300.1 585.8C297.1 583.3 294.8 579.1 293.6 576.0C292.6 573.3 292.6 569.9 293.0 567.2C293.4 564.6 295.1 562.3 296.2 559.9C294.6 559.2 293.1 558.0 291.4 557.8C287.6 557.4 278.6 557.7 273.4 557.4C269.0 557.1 264.2 557.1 260.4 555.8C256.7 554.5 253.2 552.0 250.6 549.3C248.0 546.6 246.1 542.8 244.9 539.5C243.7 536.4 243.1 533.0 243.2 529.7C243.3 526.4 244.5 522.8 245.7 519.9C246.9 517.2 249.0 515.0 250.6 512.6C250.0 511.8 249.6 510.8 248.9 510.1C247.4 508.7 243.8 506.5 241.6 504.4C239.3 502.2 236.9 499.7 235.1 497.1C233.4 494.6 231.8 491.6 231.0 488.9C230.2 486.3 229.6 483.4 230.2 480.8C230.8 478.2 232.9 476.0 234.3 473.6C233.2 474.1 232.2 475.0 231.0 475.1C228.8 475.2 224.0 475.1 221.2 474.3C218.5 473.5 215.7 472.0 213.9 470.2C212.1 468.4 210.8 465.9 210.5 463.5C210.2 461.1 211.3 458.3 212.0 455.7C212.8 452.4 214.3 447.9 215.5 444.0C216.9 439.7 218.7 433.7 220.2 430.0C221.3 427.2 222.8 423.8 224.3 421.8C225.6 420.1 227.7 418.7 229.5 417.8C231.3 417.0 233.4 416.5 235.3 416.6C237.2 416.7 239.6 417.5 241.2 418.3C242.6 419.0 243.5 420.3 244.7 421.3C246.2 419.7 247.6 417.8 249.3 416.6C251.1 415.4 253.2 414.5 255.2 414.3C257.1 414.1 259.2 414.5 261.0 415.4C262.8 416.3 264.1 418.1 265.7 419.5C267.2 417.9 268.6 416.0 270.3 414.8C272.1 413.6 274.2 412.6 276.2 412.3C278.1 412.0 280.2 412.4 282.0 413.1C283.9 413.8 285.5 415.4 287.3 416.6C289.4 415.2 291.3 413.4 293.7 412.5C296.5 411.4 300.7 410.8 304.2 410.2C307.9 409.6 311.9 409.2 315.8 408.8C319.7 408.4 323.6 408.0 327.5 407.6C331.6 407.2 336.0 406.7 340.3 406.3C340.5 404.5 340.6 402.6 340.9 400.8C341.2 398.8 341.8 396.1 342.4 394.0C343.0 391.9 343.7 389.9 344.8 388.0C346.0 385.8 348.0 383.3 349.8 381.0C352.0 378.2 355.4 373.9 357.9 371.2C360.0 368.9 361.8 366.2 364.5 364.7C367.2 363.2 371.1 362.3 374.3 362.2Z" fill="#e09c9d" stroke="#a97476" stroke-width="0.7"/>
<g transform="translate(-3 2.4)"><path d="M356 432 C355 415 355 400 358 392 C361 384 368 380 374 382 C380 385 380 394 374 396 C370 397 368 394 369 391" stroke="#573638" stroke-width="5.7"/><path d="M356 432 C355 415 355 400 358 392 C361 384 368 380 374 382 C380 385 380 394 374 396 C370 397 368 394 369 391" stroke="url(#hatch)" stroke-width="4.6"/></g><path d="M356 432 C355 415 355 400 358 392 C361 384 368 380 374 382 C380 385 380 394 374 396 C370 397 368 394 369 391" stroke="#573638" stroke-width="5.7"/><path d="M356 432 C355 415 355 400 358 392 C361 384 368 380 374 382 C380 385 380 394 374 396 C370 397 368 394 369 391" stroke="#e09c9d" stroke-width="4.6"/>
<g transform="translate(-3 2.4)"><path d="M431 434 C436 446 444 456 453 459 C461 461 468 456 469 449 C469 444 464 441 461 444 C459 446 460 449 462 450" stroke="#573638" stroke-width="5.7"/><path d="M431 434 C436 446 444 456 453 459 C461 461 468 456 469 449 C469 444 464 441 461 444 C459 446 460 449 462 450" stroke="url(#hatch)" stroke-width="4.6"/></g><path d="M431 434 C436 446 444 456 453 459 C461 461 468 456 469 449 C469 444 464 441 461 444 C459 446 460 449 462 450" stroke="#573638" stroke-width="5.7"/><path d="M431 434 C436 446 444 456 453 459 C461 461 468 456 469 449 C469 444 464 441 461 444 C459 446 460 449 462 450" stroke="#e09c9d" stroke-width="4.6"/>
<g transform="translate(-3 2.4)"><path d="M243 458 C246 470 252 480 260 484 C268 487 276 482 277 474 C277 468 271 465 268 469 C266 471 267 474 269 475" stroke="#573638" stroke-width="5.7"/><path d="M243 458 C246 470 252 480 260 484 C268 487 276 482 277 474 C277 468 271 465 268 469 C266 471 267 474 269 475" stroke="url(#hatch)" stroke-width="4.6"/></g><path d="M243 458 C246 470 252 480 260 484 C268 487 276 482 277 474 C277 468 271 465 268 469 C266 471 267 474 269 475" stroke="#573638" stroke-width="5.7"/><path d="M243 458 C246 470 252 480 260 484 C268 487 276 482 277 474 C277 468 271 465 268 469 C266 471 267 474 269 475" stroke="#e09c9d" stroke-width="4.6"/>
<g transform="translate(-3 2.4)"><path d="M306 540 C308 550 314 558 322 562 C330 565 337 560 338 553 C338 548 333 546 330 549 C328 551 329 554 331 555" stroke="#573638" stroke-width="5.7"/><path d="M306 540 C308 550 314 558 322 562 C330 565 337 560 338 553 C338 548 333 546 330 549 C328 551 329 554 331 555" stroke="url(#hatch)" stroke-width="4.6"/></g><path d="M306 540 C308 550 314 558 322 562 C330 565 337 560 338 553 C338 548 333 546 330 549 C328 551 329 554 331 555" stroke="#573638" stroke-width="5.7"/><path d="M306 540 C308 550 314 558 322 562 C330 565 337 560 338 553 C338 548 333 546 330 549 C328 551 329 554 331 555" stroke="#e09c9d" stroke-width="4.6"/>
<g transform="translate(-3 2.4)"><path d="M399 521 C398 508 398 497 400 489 C403 480 410 473 416 476 C422 479 422 488 416 490 C412 491 410 488 411 485" stroke="#573638" stroke-width="5.7"/><path d="M399 521 C398 508 398 497 400 489 C403 480 410 473 416 476 C422 479 422 488 416 490 C412 491 410 488 411 485" stroke="url(#hatch)" stroke-width="4.6"/></g><path d="M399 521 C398 508 398 497 400 489 C403 480 410 473 416 476 C422 479 422 488 416 490 C412 491 410 488 411 485" stroke="#573638" stroke-width="5.7"/><path d="M399 521 C398 508 398 497 400 489 C403 480 410 473 416 476 C422 479 422 488 416 490 C412 491 410 488 411 485" stroke="#e09c9d" stroke-width="4.6"/>
<path d="M368.5 376.1 Q386.0 371.0 386.5 394.0 Q377.5 380.5 368.5 376.1Z" fill="url(#hatch)" stroke="#573638" stroke-width="0.55"/>
<path d="M432.8 461.4 Q447.0 486.0 465.2 468.1 Q448.4 474.6 432.8 461.4Z" fill="url(#hatch)" stroke="#573638" stroke-width="0.55"/>
<path d="M239.2 485.7 Q251.0 513.0 272.6 496.3 Q252.6 499.6 239.2 485.7Z" fill="url(#hatch)" stroke="#573638" stroke-width="0.55"/>
<path d="M302.6 567.9 Q314.0 590.0 332.8 573.6 Q315.6 577.6 302.6 567.9Z" fill="url(#hatch)" stroke="#573638" stroke-width="0.55"/>
<path d="M291 480.2 C296 484.4 300.6 482.6 305.6 478 C310.6 473.4 316.4 472.6 319.2 480.2 C315.4 477.6 311.4 480.4 307.4 484 C301.4 489.4 294.6 488 291 480.2Z" fill="url(#hatch)" stroke="#573638" stroke-width="0.55"/>
<path d="M370 471.6 C375 475.8 380.6 474 386 468.8 C391 464.2 396.4 463.8 398.2 473 C394.8 469.4 391.4 471.2 387.8 474.8 C381.4 480.8 373.8 479.4 370 471.6Z" fill="url(#hatch)" stroke="#573638" stroke-width="0.55"/>
<g transform="matrix(0.8887 -0.1097 0 1.0000 222.00 462.40)" font-family="Liberation Sans, sans-serif" font-size="48.5" stroke-linejoin="round"><text x="-4.95" y="2.86" fill="#573638" stroke="#573638" stroke-width="2.50"><tspan font-size="48.5">A</tspan><tspan font-size="47.8">D</tspan><tspan font-size="47.0">V</tspan><tspan font-size="46.2">E</tspan><tspan font-size="45.5">N</tspan><tspan font-size="44.8">T</tspan><tspan font-size="44.0">U</tspan><tspan font-size="43.2">R</tspan><tspan font-size="42.5">E</tspan></text><text x="-2.83" y="1.63" fill="#573638" stroke="#573638" stroke-width="2.50"><tspan font-size="48.5">A</tspan><tspan font-size="47.8">D</tspan><tspan font-size="47.0">V</tspan><tspan font-size="46.2">E</tspan><tspan font-size="45.5">N</tspan><tspan font-size="44.8">T</tspan><tspan font-size="44.0">U</tspan><tspan font-size="43.2">R</tspan><tspan font-size="42.5">E</tspan></text></g><rect x="200" y="350" width="300" height="250" fill="url(#hatch)" mask="url(#ml1)"/><g transform="matrix(0.8887 -0.1097 0 1.0000 222.00 462.40)" font-family="Liberation Sans, sans-serif" font-size="48.5" stroke-linejoin="round"><text x="0" y="0" fill="#573638" stroke="#573638" stroke-width="2.50"><tspan font-size="48.5">A</tspan><tspan font-size="47.8">D</tspan><tspan font-size="47.0">V</tspan><tspan font-size="46.2">E</tspan><tspan font-size="45.5">N</tspan><tspan font-size="44.8">T</tspan><tspan font-size="44.0">U</tspan><tspan font-size="43.2">R</tspan><tspan font-size="42.5">E</tspan></text><text x="0" y="0" fill="#e09c9d" stroke="#e09c9d" stroke-width="1.00"><tspan font-size="48.5">A</tspan><tspan font-size="47.8">D</tspan><tspan font-size="47.0">V</tspan><tspan font-size="46.2">E</tspan><tspan font-size="45.5">N</tspan><tspan font-size="44.8">T</tspan><tspan font-size="44.0">U</tspan><tspan font-size="43.2">R</tspan><tspan font-size="42.5">E</tspan></text></g>
<g transform="matrix(0.8258 -0.1045 0 1.0000 333.00 490.40)" font-family="Liberation Sans, sans-serif" font-size="40.5" stroke-linejoin="round"><text x="-5.33" y="2.84" fill="#573638" stroke="#573638" stroke-width="2.50">IS</text><text x="-3.04" y="1.62" fill="#573638" stroke="#573638" stroke-width="2.50">IS</text></g><rect x="200" y="350" width="300" height="250" fill="url(#hatch)" mask="url(#ml2)"/><g transform="matrix(0.8258 -0.1045 0 1.0000 333.00 490.40)" font-family="Liberation Sans, sans-serif" font-size="40.5" stroke-linejoin="round"><text x="0" y="0" fill="#573638" stroke="#573638" stroke-width="2.50">IS</text><text x="0" y="0" fill="#e09c9d" stroke="#e09c9d" stroke-width="1.00">IS</text></g>
<g transform="matrix(0.9834 -0.0773 0 1.0000 257.50 540.40)" font-family="Liberation Sans, sans-serif" font-size="41.5" stroke-linejoin="round"><text x="-4.47" y="3.05" fill="#573638" stroke="#573638" stroke-width="2.50"><tspan font-size="41.5">C</tspan><tspan font-size="42.2">A</tspan><tspan font-size="42.8">L</tspan><tspan font-size="43.5">L</tspan><tspan font-size="44.2">I</tspan><tspan font-size="44.8">N</tspan><tspan font-size="45.5">G</tspan></text><text x="-2.56" y="1.75" fill="#573638" stroke="#573638" stroke-width="2.50"><tspan font-size="41.5">C</tspan><tspan font-size="42.2">A</tspan><tspan font-size="42.8">L</tspan><tspan font-size="43.5">L</tspan><tspan font-size="44.2">I</tspan><tspan font-size="44.8">N</tspan><tspan font-size="45.5">G</tspan></text></g><rect x="200" y="350" width="300" height="250" fill="url(#hatch)" mask="url(#ml3)"/><g transform="matrix(0.9834 -0.0773 0 1.0000 257.50 540.40)" font-family="Liberation Sans, sans-serif" font-size="41.5" stroke-linejoin="round"><text x="0" y="0" fill="#573638" stroke="#573638" stroke-width="2.50"><tspan font-size="41.5">C</tspan><tspan font-size="42.2">A</tspan><tspan font-size="42.8">L</tspan><tspan font-size="43.5">L</tspan><tspan font-size="44.2">I</tspan><tspan font-size="44.8">N</tspan><tspan font-size="45.5">G</tspan></text><text x="0" y="0" fill="#e09c9d" stroke="#e09c9d" stroke-width="1.00"><tspan font-size="41.5">C</tspan><tspan font-size="42.2">A</tspan><tspan font-size="42.8">L</tspan><tspan font-size="43.5">L</tspan><tspan font-size="44.2">I</tspan><tspan font-size="44.8">N</tspan><tspan font-size="45.5">G</tspan></text></g>
</g>
</svg>
<div style="left:5.4px;top:660.4px;width:65.4px;height:20.6px;background:rgba(240,241,243,.82);border-radius:2px"></div>
<svg style="left:0;top:655px" width="90" height="34" viewBox="61.6 752.6 90 34" fill="none" stroke="#cfcfcf" stroke-width="0.9"><circle cx="76.6" cy="769.9" r="6"/><circle cx="122.2" cy="769.9" r="6"/><path d="M74.2 769.9H79M119.8 769.9H124.6M122.2 767.5V772.3"/></svg>
<div style="left:27.4px;top:669px;font-size:8.2px;color:#c6c6c6;white-space:nowrap">175%</div>
</div>
<div style="left:1020.7px;top:97.6px;width:9.6px;height:690px;background:#fafafa"></div>
<div style="left:1023.2px;top:120.2px;width:4.6px;height:20.6px;background:#bcbcbc;border-radius:2.3px"></div>
<div style="left:60.6px;top:787.2px;width:970px;height:9px;background:#fafafa"></div>
<div style="left:77.6px;top:789px;width:45.6px;height:4.8px;background:#bcbcbc;border-radius:2.4px"></div>
<div id="panel" style="left:1030.2px;top:49.6px;width:168px;height:747px;background:#f4f5f7">
<div style="left:0;top:0;width:168px;height:13.7px;background:#ebebeb;border-bottom:1px solid #d4d4d4"></div>
<div style="left:0;top:12.9px;width:84.4px;height:0.9px;background:#5d676f"></div>
<div style="left:0;top:2.2px;width:84px;text-align:center;font-size:7.6px;color:#333">Layers</div>
<div style="left:84px;top:2.2px;width:84px;text-align:center;font-size:7.7px;color:#333">Color Sync</div>
<div style="left:0;top:14px;width:168px;height:33.7px;background:#e4e4e4"></div>
<div style="left:-1.2px;top:36.2px;width:40px;text-align:center;font-size:6.5px;color:#bcbcbc">Group</div>
<div style="left:40.6px;top:36.2px;width:40px;text-align:center;font-size:6.5px;color:#bcbcbc">UnGroup</div>
<div style="left:86.9px;top:36.2px;width:40px;text-align:center;font-size:6.5px;color:#bcbcbc">Duplicate</div>
<div style="left:129.3px;top:36.2px;width:40px;text-align:center;font-size:6.5px;color:#bcbcbc">Delete</div>
<div style="left:18.2px;top:53.0px;font-size:9.1px;color:#2b2b2b;white-space:nowrap;line-height:11px">Attach</div>
<div style="left:44.4px;top:76.9px;font-size:7.85px;color:#222;white-space:nowrap;line-height:9px">Pen</div>
<div style="left:44.4px;top:104.6px;font-size:7.85px;color:#222;white-space:nowrap;line-height:9px">Basic Cut</div>
<div style="left:18.2px;top:129.9px;font-size:9.1px;color:#2b2b2b;white-space:nowrap;line-height:11px">Attach</div>
<div style="left:44.4px;top:153.9px;font-size:7.85px;color:#222;white-space:nowrap;line-height:9px">Pen</div>
<div style="left:44.4px;top:181.6px;font-size:7.85px;color:#222;white-space:nowrap;line-height:9px">Basic Cut</div>
<div style="left:18.2px;top:206.8px;font-size:9.1px;color:#2b2b2b;white-space:nowrap;line-height:11px">Group</div>
<div style="left:31.3px;top:227.2px;font-size:9.1px;color:#2b2b2b;white-space:nowrap;line-height:11px">Choose Joy</div>
<div style="left:31.3px;top:248.4px;font-size:9.1px;color:#2b2b2b;white-space:nowrap;line-height:11px">Choose Joy</div>
<div style="left:31.3px;top:269.6px;font-size:9.1px;color:#2b2b2b;white-space:nowrap;line-height:11px">Hide This Layer Before C…</div>
<div style="left:31.3px;top:291.1px;font-size:9.1px;color:#2b2b2b;white-space:nowrap;line-height:11px">Small Mug Wrap</div>
<div style="left:31.3px;top:312.4px;font-size:9.1px;color:#2b2b2b;white-space:nowrap;line-height:11px">Small Mug Wrap</div>
<div style="left:18.2px;top:335.3px;font-size:9.1px;color:#2b2b2b;white-space:nowrap;line-height:11px">Hide This Layer Before Cutti…</div>
<div style="left:44.2px;top:358.1px;font-size:7.85px;color:#222;white-space:nowrap;line-height:9px">Pen</div>
<div style="left:18.2px;top:383.6px;font-size:9.1px;color:#2b2b2b;white-space:nowrap;line-height:11px">Small Mug Wrap</div>
<div style="left:44.2px;top:406.4px;font-size:7.85px;color:#222;white-space:nowrap;line-height:9px">Basic Cut</div>
<div style="left:18.2px;top:432.2px;font-size:9.1px;color:#2b2b2b;white-space:nowrap;line-height:11px">Small Mug Wrap</div>
<div style="left:44.2px;top:455.0px;font-size:7.85px;color:#222;white-space:nowrap;line-height:9px">Basic Cut</div>
<svg style="left:0;top:0" width="168" height="747" viewBox="1031.2 49.6 168 747" fill="none" stroke-linejoin="round" stroke-linecap="round">
<g stroke="#bdbdbd" stroke-width="0.8">
<rect x="1044.4" y="69" width="11.2" height="9" stroke-dasharray="1 0.8"/><rect x="1046.4" y="70.8" width="4.6" height="3.8"/><rect x="1049" y="72.8" width="4.6" height="3.8"/>
<rect x="1043.6" y="68.2" width="1.6" height="1.6" fill="#bdbdbd" stroke="none"/><rect x="1054.8" y="68.2" width="1.6" height="1.6" fill="#bdbdbd" stroke="none"/><rect x="1043.6" y="77.2" width="1.6" height="1.6" fill="#bdbdbd" stroke="none"/><rect x="1054.8" y="77.2" width="1.6" height="1.6" fill="#bdbdbd" stroke="none"/>
<rect x="1087" y="68.8" width="6" height="6" stroke-dasharray="1 0.8"/><rect x="1090.4" y="72.2" width="6.4" height="6.2" stroke-dasharray="1 0.8"/>
<rect x="1133.4" y="68.6" width="7" height="7.4" rx="0.6"/><rect x="1136" y="71" width="7" height="7.4" rx="0.6"/>
<path d="M1176 70.4H1185M1178.6 70.4V69.2H1182.4V70.4M1177 70.4L1177.6 78.4H1183.4L1184 70.4M1179.2 72.4V76.6M1180.5 72.4V76.6M1181.8 72.4V76.6"/>
</g>
<path d="M1037.6 106.5H1042.2L1039.9 109.1Z" fill="#222"/>
<g stroke="#2c2c2c" stroke-width="1"><path d="M1180.6999999999998 107.6 Q1185.1 103.0 1189.5 107.6 Q1185.1 112.19999999999999 1180.6999999999998 107.6Z"/>
<circle cx="1185.1" cy="107.6" r="2.1" fill="#2c2c2c" stroke="none"/><circle cx="1184.6" cy="107.0" r="0.6" fill="#f4f5f7" stroke="none"/>
</g>
<path d="M1049.4 117.3H1200" stroke="#d3d4d6" stroke-width="0.9"/>
<g stroke="#2c2c2c" stroke-width="1"><path d="M1180.6999999999998 130.8 Q1185.1 126.20000000000002 1189.5 130.8 Q1185.1 135.4 1180.6999999999998 130.8Z"/>
<circle cx="1185.1" cy="130.8" r="2.1" fill="#2c2c2c" stroke="none"/><circle cx="1184.6" cy="130.20000000000002" r="0.6" fill="#f4f5f7" stroke="none"/>
</g>
<path d="M1049.4 145.3H1200" stroke="#d3d4d6" stroke-width="0.9"/>
<g stroke="#2c2c2c" stroke-width="1"><path d="M1180.6999999999998 158.5 Q1185.1 153.9 1189.5 158.5 Q1185.1 163.1 1180.6999999999998 158.5Z"/>
<circle cx="1185.1" cy="158.5" r="2.1" fill="#2c2c2c" stroke="none"/><circle cx="1184.6" cy="157.9" r="0.6" fill="#f4f5f7" stroke="none"/>
</g>
<path d="M1031.2 174H1200" stroke="#d3d4d6" stroke-width="0.9"/>
<path d="M1037.6 183.4H1042.2L1039.9 186.0Z" fill="#222"/>
<g stroke="#2c2c2c" stroke-width="1"><path d="M1180.6999999999998 184.5 Q1185.1 179.9 1189.5 184.5 Q1185.1 189.1 1180.6999999999998 184.5Z"/>
<circle cx="1185.1" cy="184.5" r="2.1" fill="#2c2c2c" stroke="none"/><circle cx="1184.6" cy="183.9" r="0.6" fill="#f4f5f7" stroke="none"/>
</g>
<path d="M1049.4 194.6H1200" stroke="#d3d4d6" stroke-width="0.9"/>
<g stroke="#2c2c2c" stroke-width="1"><path d="M1180.6999999999998 207.8 Q1185.1 203.20000000000002 1189.5 207.8 Q1185.1 212.4 1180.6999999999998 207.8Z"/>
<circle cx="1185.1" cy="207.8" r="2.1" fill="#2c2c2c" stroke="none"/><circle cx="1184.6" cy="207.20000000000002" r="0.6" fill="#f4f5f7" stroke="none"/>
</g>
<path d="M1049.4 222.2H1200" stroke="#d3d4d6" stroke-width="0.9"/>
<g stroke="#2c2c2c" stroke-width="1"><path d="M1180.6999999999998 235.5 Q1185.1 230.9 1189.5 235.5 Q1185.1 240.1 1180.6999999999998 235.5Z"/>
<circle cx="1185.1" cy="235.5" r="2.1" fill="#2c2c2c" stroke="none"/><circle cx="1184.6" cy="234.9" r="0.6" fill="#f4f5f7" stroke="none"/>
</g>
<path d="M1031.2 251.4H1200" stroke="#d3d4d6" stroke-width="0.9"/>
<path d="M1037.6 260.29999999999995H1042.2L1039.9 262.9Z" fill="#222"/>
<g stroke="#2c2c2c" stroke-width="1"><path d="M1180.6999999999998 261.4 Q1185.1 256.79999999999995 1189.5 261.4 Q1185.1 266.0 1180.6999999999998 261.4Z"/>
<circle cx="1185.1" cy="261.4" r="2.1" fill="#2c2c2c" stroke="none"/><circle cx="1184.6" cy="260.79999999999995" r="0.6" fill="#f4f5f7" stroke="none"/>
<path d="M1181.5 258.0L1189.3 265.2" stroke="#f4f5f7" stroke-width="2.2"/><path d="M1181.1 258.2L1189.5 264.79999999999995" />
</g>
<path d="M1049.4 271.6H1200" stroke="#d3d4d6" stroke-width="0.9"/>
<path d="M1052.2 279.6V284.0L1054.8 281.8Z" fill="#222"/>
<g stroke="#2c2c2c" stroke-width="1"><path d="M1180.6999999999998 281.8 Q1185.1 277.2 1189.5 281.8 Q1185.1 286.40000000000003 1180.6999999999998 281.8Z"/>
<circle cx="1185.1" cy="281.8" r="2.1" fill="#2c2c2c" stroke="none"/><circle cx="1184.6" cy="281.2" r="0.6" fill="#f4f5f7" stroke="none"/>
<path d="M1181.5 278.40000000000003L1189.3 285.6" stroke="#f4f5f7" stroke-width="2.2"/><path d="M1181.1 278.6L1189.5 285.2" />
</g>
<path d="M1052.2 300.8V305.2L1054.8 303Z" fill="#222"/>
<g stroke="#2c2c2c" stroke-width="1"><path d="M1180.6999999999998 303 Q1185.1 298.4 1189.5 303 Q1185.1 307.6 1180.6999999999998 303Z"/>
<circle cx="1185.1" cy="303" r="2.1" fill="#2c2c2c" stroke="none"/><circle cx="1184.6" cy="302.4" r="0.6" fill="#f4f5f7" stroke="none"/>
<path d="M1181.5 299.6L1189.3 306.8" stroke="#f4f5f7" stroke-width="2.2"/><path d="M1181.1 299.8L1189.5 306.4" />
</g>
<path d="M1052.2 322.0V326.4L1054.8 324.2Z" fill="#222"/>
<g stroke="#2c2c2c" stroke-width="1"><path d="M1180.6999999999998 324.2 Q1185.1 319.59999999999997 1189.5 324.2 Q1185.1 328.8 1180.6999999999998 324.2Z"/>
<circle cx="1185.1" cy="324.2" r="2.1" fill="#2c2c2c" stroke="none"/><circle cx="1184.6" cy="323.59999999999997" r="0.6" fill="#f4f5f7" stroke="none"/>
<path d="M1181.5 320.8L1189.3 328.0" stroke="#f4f5f7" stroke-width="2.2"/><path d="M1181.1 321.0L1189.5 327.59999999999997" />
</g>
<path d="M1052.2 343.5V347.9L1054.8 345.7Z" fill="#222"/>
<g stroke="#2c2c2c" stroke-width="1"><path d="M1180.6999999999998 345.7 Q1185.1 341.09999999999997 1189.5 345.7 Q1185.1 350.3 1180.6999999999998 345.7Z"/>
<circle cx="1185.1" cy="345.7" r="2.1" fill="#2c2c2c" stroke="none"/><circle cx="1184.6" cy="345.09999999999997" r="0.6" fill="#f4f5f7" stroke="none"/>
<path d="M1181.5 342.3L1189.3 349.5" stroke="#f4f5f7" stroke-width="2.2"/><path d="M1181.1 342.5L1189.5 349.09999999999997" />
</g>
<path d="M1052.2 364.8V369.2L1054.8 367Z" fill="#222"/>
<g stroke="#2c2c2c" stroke-width="1"><path d="M1180.6999999999998 367 Q1185.1 362.4 1189.5 367 Q1185.1 371.6 1180.6999999999998 367Z"/>
<circle cx="1185.1" cy="367" r="2.1" fill="#2c2c2c" stroke="none"/><circle cx="1184.6" cy="366.4" r="0.6" fill="#f4f5f7" stroke="none"/>
<path d="M1181.5 363.6L1189.3 370.8" stroke="#f4f5f7" stroke-width="2.2"/><path d="M1181.1 363.8L1189.5 370.4" />
</g>
<path d="M1049.4 292.1H1200" stroke="#d3d4d6" stroke-width="0.9"/>
<path d="M1049.4 313.5H1200" stroke="#d3d4d6" stroke-width="0.9"/>
<path d="M1049.4 335.2H1200" stroke="#d3d4d6" stroke-width="0.9"/>
<path d="M1049.4 356.3H1200" stroke="#d3d4d6" stroke-width="0.9"/>
<path d="M1031.2 378.6H1200" stroke="#d3d4d6" stroke-width="0.9"/>
<path d="M1037.6 388.79999999999995H1042.2L1039.9 391.4Z" fill="#222"/>
<g stroke="#2c2c2c" stroke-width="1"><path d="M1180.6999999999998 389.9 Q1185.1 385.29999999999995 1189.5 389.9 Q1185.1 394.5 1180.6999999999998 389.9Z"/>
<circle cx="1185.1" cy="389.9" r="2.1" fill="#2c2c2c" stroke="none"/><circle cx="1184.6" cy="389.29999999999995" r="0.6" fill="#f4f5f7" stroke="none"/>
</g>
<path d="M1031.2 427.6H1200" stroke="#d3d4d6" stroke-width="0.9"/>
<path d="M1037.6 437.09999999999997H1042.2L1039.9 439.7Z" fill="#222"/>
<g stroke="#2c2c2c" stroke-width="1"><path d="M1180.6999999999998 438.2 Q1185.1 433.59999999999997 1189.5 438.2 Q1185.1 442.8 1180.6999999999998 438.2Z"/>
<circle cx="1185.1" cy="438.2" r="2.1" fill="#2c2c2c" stroke="none"/><circle cx="1184.6" cy="437.59999999999997" r="0.6" fill="#f4f5f7" stroke="none"/>
</g>
<path d="M1031.2 476.1H1200" stroke="#d3d4d6" stroke-width="0.9"/>
<path d="M1037.6 485.7H1042.2L1039.9 488.3Z" fill="#222"/>
<g stroke="#2c2c2c" stroke-width="1"><path d="M1180.6999999999998 486.8 Q1185.1 482.2 1189.5 486.8 Q1185.1 491.40000000000003 1180.6999999999998 486.8Z"/>
<circle cx="1185.1" cy="486.8" r="2.1" fill="#2c2c2c" stroke="none"/><circle cx="1184.6" cy="486.2" r="0.6" fill="#f4f5f7" stroke="none"/>
</g>
<rect x="1050" y="505" width="19" height="8" fill="#fff"/>
<path transform="translate(1034.18 124.11) scale(0.0723)" d="M374.3 362.2C377.6 362.1 381.0 362.8 384.0 363.9C387.0 365.0 389.9 366.6 392.2 368.8C394.5 371.1 396.7 374.6 397.9 377.7C399.1 380.8 399.6 384.2 399.5 387.5C399.4 390.8 397.5 395.0 397.2 397.5C397.0 399.2 397.5 400.9 397.6 402.6C400.1 402.4 402.7 402.5 405.2 402.0C407.8 401.5 410.9 400.3 413.4 399.7C415.6 399.2 417.8 398.5 420.0 398.3C423.6 397.9 431.1 397.8 435.1 397.3C438.2 396.9 441.6 395.8 444.1 395.1C446.1 394.6 448.0 393.3 450.1 393.3C452.4 393.3 455.2 394.6 457.7 395.3C460.2 394.9 462.7 393.9 465.2 394.1C467.7 394.3 470.5 395.2 472.7 396.6C475.0 398.0 477.4 400.4 478.8 402.6C480.2 404.8 480.8 407.8 481.0 410.1C481.2 412.1 480.8 414.6 480.3 416.2C479.9 417.6 478.8 418.7 478.0 419.9C478.8 421.7 480.1 423.6 480.3 425.2C480.5 426.7 479.8 428.2 479.5 429.7C480.2 431.5 481.3 433.1 481.5 435.0C481.8 437.0 481.6 439.9 481.0 441.8C480.5 443.5 479.0 444.8 478.0 446.3C477.0 447.8 476.0 449.3 475.0 450.8C475.6 452.8 476.7 454.7 476.9 456.8C477.1 459.1 476.9 461.9 476.5 464.4C476.1 466.9 475.6 469.5 474.5 471.9C473.4 474.4 471.5 477.4 469.7 479.4C468.0 481.3 466.0 482.9 463.7 484.0C461.2 485.2 457.1 485.7 454.7 486.6C452.8 487.3 451.0 488.3 449.2 489.2C448.9 492.8 448.3 496.4 448.4 500.0C448.5 504.5 449.6 512.2 449.6 516.3C449.6 519.0 449.4 522.0 448.2 524.3C447.0 526.6 444.8 528.9 442.4 530.3C439.4 532.1 434.5 534.0 430.3 535.2C424.9 536.7 416.9 538.2 410.2 539.4C403.6 540.6 396.9 541.5 390.2 542.6C383.5 543.7 376.7 544.4 370.1 545.8C363.6 547.1 357.2 549.1 350.7 550.7C349.6 552.1 348.1 553.2 347.4 554.8C346.2 557.7 344.6 564.4 343.8 567.9C343.2 570.6 343.6 573.5 342.5 576.0C341.2 579.0 339.0 583.3 336.0 585.8C333.0 588.3 328.7 590.0 324.6 590.9C320.5 591.8 315.7 591.8 311.6 590.9C307.5 590.0 303.1 588.3 300.1 585.8C297.1 583.3 294.8 579.1 293.6 576.0C292.6 573.3 292.6 569.9 293.0 567.2C293.4 564.6 295.1 562.3 296.2 559.9C294.6 559.2 293.1 558.0 291.4 557.8C287.6 557.4 278.6 557.7 273.4 557.4C269.0 557.1 264.2 557.1 260.4 555.8C256.7 554.5 253.2 552.0 250.6 549.3C248.0 546.6 246.1 542.8 244.9 539.5C243.7 536.4 243.1 533.0 243.2 529.7C243.3 526.4 244.5 522.8 245.7 519.9C246.9 517.2 249.0 515.0 250.6 512.6C250.0 511.8 249.6 510.8 248.9 510.1C247.4 508.7 243.8 506.5 241.6 504.4C239.3 502.2 236.9 499.7 235.1 497.1C233.4 494.6 231.8 491.6 231.0 488.9C230.2 486.3 229.6 483.4 230.2 480.8C230.8 478.2 232.9 476.0 234.3 473.6C233.2 474.1 232.2 475.0 231.0 475.1C228.8 475.2 224.0 475.1 221.2 474.3C218.5 473.5 215.7 472.0 213.9 470.2C212.1 468.4 210.8 465.9 210.5 463.5C210.2 461.1 211.3 458.3 212.0 455.7C212.8 452.4 214.3 447.9 215.5 444.0C216.9 439.7 218.7 433.7 220.2 430.0C221.3 427.2 222.8 423.8 224.3 421.8C225.6 420.1 227.7 418.7 229.5 417.8C231.3 417.0 233.4 416.5 235.3 416.6C237.2 416.7 239.6 417.5 241.2 418.3C242.6 419.0 243.5 420.3 244.7 421.3C246.2 419.7 247.6 417.8 249.3 416.6C251.1 415.4 253.2 414.5 255.2 414.3C257.1 414.1 259.2 414.5 261.0 415.4C262.8 416.3 264.1 418.1 265.7 419.5C267.2 417.9 268.6 416.0 270.3 414.8C272.1 413.6 274.2 412.6 276.2 412.3C278.1 412.0 280.2 412.4 282.0 413.1C283.9 413.8 285.5 415.4 287.3 416.6C289.4 415.2 291.3 413.4 293.7 412.5C296.5 411.4 300.7 410.8 304.2 410.2C307.9 409.6 311.9 409.2 315.8 408.8C319.7 408.4 323.6 408.0 327.5 407.6C331.6 407.2 336.0 406.7 340.3 406.3C340.5 404.5 340.6 402.6 340.9 400.8C341.2 398.8 341.8 396.1 342.4 394.0C343.0 391.9 343.7 389.9 344.8 388.0C346.0 385.8 348.0 383.3 349.8 381.0C352.0 378.2 355.4 373.9 357.9 371.2C360.0 368.9 361.8 366.2 364.5 364.7C367.2 363.2 371.1 362.3 374.3 362.2Z" fill="#e39b9c" stroke="#e39b9c" stroke-width="6"/>
<path transform="translate(1034.18 201.11) scale(0.0723)" d="M374.3 362.2C377.6 362.1 381.0 362.8 384.0 363.9C387.0 365.0 389.9 366.6 392.2 368.8C394.5 371.1 396.7 374.6 397.9 377.7C399.1 380.8 399.6 384.2 399.5 387.5C399.4 390.8 397.5 395.0 397.2 397.5C397.0 399.2 397.5 400.9 397.6 402.6C400.1 402.4 402.7 402.5 405.2 402.0C407.8 401.5 410.9 400.3 413.4 399.7C415.6 399.2 417.8 398.5 420.0 398.3C423.6 397.9 431.1 397.8 435.1 397.3C438.2 396.9 441.6 395.8 444.1 395.1C446.1 394.6 448.0 393.3 450.1 393.3C452.4 393.3 455.2 394.6 457.7 395.3C460.2 394.9 462.7 393.9 465.2 394.1C467.7 394.3 470.5 395.2 472.7 396.6C475.0 398.0 477.4 400.4 478.8 402.6C480.2 404.8 480.8 407.8 481.0 410.1C481.2 412.1 480.8 414.6 480.3 416.2C479.9 417.6 478.8 418.7 478.0 419.9C478.8 421.7 480.1 423.6 480.3 425.2C480.5 426.7 479.8 428.2 479.5 429.7C480.2 431.5 481.3 433.1 481.5 435.0C481.8 437.0 481.6 439.9 481.0 441.8C480.5 443.5 479.0 444.8 478.0 446.3C477.0 447.8 476.0 449.3 475.0 450.8C475.6 452.8 476.7 454.7 476.9 456.8C477.1 459.1 476.9 461.9 476.5 464.4C476.1 466.9 475.6 469.5 474.5 471.9C473.4 474.4 471.5 477.4 469.7 479.4C468.0 481.3 466.0 482.9 463.7 484.0C461.2 485.2 457.1 485.7 454.7 486.6C452.8 487.3 451.0 488.3 449.2 489.2C448.9 492.8 448.3 496.4 448.4 500.0C448.5 504.5 449.6 512.2 449.6 516.3C449.6 519.0 449.4 522.0 448.2 524.3C447.0 526.6 444.8 528.9 442.4 530.3C439.4 532.1 434.5 534.0 430.3 535.2C424.9 536.7 416.9 538.2 410.2 539.4C403.6 540.6 396.9 541.5 390.2 542.6C383.5 543.7 376.7 544.4 370.1 545.8C363.6 547.1 357.2 549.1 350.7 550.7C349.6 552.1 348.1 553.2 347.4 554.8C346.2 557.7 344.6 564.4 343.8 567.9C343.2 570.6 343.6 573.5 342.5 576.0C341.2 579.0 339.0 583.3 336.0 585.8C333.0 588.3 328.7 590.0 324.6 590.9C320.5 591.8 315.7 591.8 311.6 590.9C307.5 590.0 303.1 588.3 300.1 585.8C297.1 583.3 294.8 579.1 293.6 576.0C292.6 573.3 292.6 569.9 293.0 567.2C293.4 564.6 295.1 562.3 296.2 559.9C294.6 559.2 293.1 558.0 291.4 557.8C287.6 557.4 278.6 557.7 273.4 557.4C269.0 557.1 264.2 557.1 260.4 555.8C256.7 554.5 253.2 552.0 250.6 549.3C248.0 546.6 246.1 542.8 244.9 539.5C243.7 536.4 243.1 533.0 243.2 529.7C243.3 526.4 244.5 522.8 245.7 519.9C246.9 517.2 249.0 515.0 250.6 512.6C250.0 511.8 249.6 510.8 248.9 510.1C247.4 508.7 243.8 506.5 241.6 504.4C239.3 502.2 236.9 499.7 235.1 497.1C233.4 494.6 231.8 491.6 231.0 488.9C230.2 486.3 229.6 483.4 230.2 480.8C230.8 478.2 232.9 476.0 234.3 473.6C233.2 474.1 232.2 475.0 231.0 475.1C228.8 475.2 224.0 475.1 221.2 474.3C218.5 473.5 215.7 472.0 213.9 470.2C212.1 468.4 210.8 465.9 210.5 463.5C210.2 461.1 211.3 458.3 212.0 455.7C212.8 452.4 214.3 447.9 215.5 444.0C216.9 439.7 218.7 433.7 220.2 430.0C221.3 427.2 222.8 423.8 224.3 421.8C225.6 420.1 227.7 418.7 229.5 417.8C231.3 417.0 233.4 416.5 235.3 416.6C237.2 416.7 239.6 417.5 241.2 418.3C242.6 419.0 243.5 420.3 244.7 421.3C246.2 419.7 247.6 417.8 249.3 416.6C251.1 415.4 253.2 414.5 255.2 414.3C257.1 414.1 259.2 414.5 261.0 415.4C262.8 416.3 264.1 418.1 265.7 419.5C267.2 417.9 268.6 416.0 270.3 414.8C272.1 413.6 274.2 412.6 276.2 412.3C278.1 412.0 280.2 412.4 282.0 413.1C283.9 413.8 285.5 415.4 287.3 416.6C289.4 415.2 291.3 413.4 293.7 412.5C296.5 411.4 300.7 410.8 304.2 410.2C307.9 409.6 311.9 409.2 315.8 408.8C319.7 408.4 323.6 408.0 327.5 407.6C331.6 407.2 336.0 406.7 340.3 406.3C340.5 404.5 340.6 402.6 340.9 400.8C341.2 398.8 341.8 396.1 342.4 394.0C343.0 391.9 343.7 389.9 344.8 388.0C346.0 385.8 348.0 383.3 349.8 381.0C352.0 378.2 355.4 373.9 357.9 371.2C360.0 368.9 361.8 366.2 364.5 364.7C367.2 363.2 371.1 362.3 374.3 362.2Z" fill="#e39b9c" stroke="#e39b9c" stroke-width="6"/>
<g transform="translate(1034.18 96.21) scale(0.0723)" font-family="Liberation Sans, sans-serif" fill="#d9dadc" stroke="#d9dadc" stroke-width="9" stroke-linejoin="round">
<text transform="matrix(0.8887 -0.1026 0 1 222.00 462.20)" font-size="48">ADVENTURE</text>
<text transform="matrix(0.9669 -0.1098 0 1 330.00 494.60)" font-size="38">IS</text>
<text transform="matrix(0.9883 -0.0967 0 1 257.00 547.40)" font-size="48">CALLING</text>
<path d="M356 432C355 405 358 385 374 382M431 434C440 455 460 465 469 449M243 458C250 480 270 492 277 474M306 540C312 560 332 570 338 553M399 521C397 495 405 470 420 480M240 486Q251 513 272 496M303 568Q314 590 332 574M433 461Q447 486 465 468M369 376Q386 371 386 394" fill="none"/>
</g>
<g transform="translate(1034.18 173.21) scale(0.0723)" font-family="Liberation Sans, sans-serif" fill="#d9dadc" stroke="#d9dadc" stroke-width="9" stroke-linejoin="round">
<text transform="matrix(0.8887 -0.1026 0 1 222.00 462.20)" font-size="48">ADVENTURE</text>
<text transform="matrix(0.9669 -0.1098 0 1 330.00 494.60)" font-size="38">IS</text>
<text transform="matrix(0.9883 -0.0967 0 1 257.00 547.40)" font-size="48">CALLING</text>
<path d="M356 432C355 405 358 385 374 382M431 434C440 455 460 465 469 449M243 458C250 480 270 492 277 474M306 540C312 560 332 570 338 553M399 521C397 495 405 470 420 480M240 486Q251 513 272 496M303 568Q314 590 332 574M433 461Q447 486 465 468M369 376Q386 371 386 394" fill="none"/>
</g>
<path d="M1031.2 730.6H1200" stroke="#dcdcdc" stroke-width="0.9" stroke-dasharray="1.2 1"/>
<rect x="1038.2" y="735.6" width="33.4" height="22.8" fill="#fff" stroke="#555" stroke-width="0.8"/>
<rect x="1031.2" y="762.4" width="170" height="40" fill="#e4e4e4"/>
<path d="M1031.2 762.4H1200" stroke="#ececec" stroke-width="0.9" stroke-dasharray="1.2 1"/>
<g stroke="#c2c2c2" stroke-width="0.8">
<rect x="1040.2" y="767.2" width="7" height="6.6" rx="0.5"/><circle cx="1047.4" cy="773.4" r="3.6"/><circle cx="1047" cy="773" r="1.5"/>
<path d="M1070.4 767.2H1077V770A3.7 3.7 0 1 1 1073.6 774H1070.4Z"/>
<g transform="translate(1107.9 772) rotate(-38)"><path d="M-1.9 -4.6V3.4A1.9 1.9 0 0 0 1.9 3.4V-4.2A1.25 1.25 0 0 0 -0.6 -4.2V2.6"/></g>
<path d="M1142.6 766.6V771.4M1140.8 769.8L1142.6 771.6L1144.4 769.8M1139.4 770.6L1136.8 772L1142.6 775L1148.4 772L1145.8 770.6M1136.8 774.2L1142.6 777.2L1148.4 774.2"/>
<rect x="1174.4" y="766.8" width="10.8" height="10.4" rx="0.8"/><path d="M1177 769.4L1178.2 770.6M1182.6 769.4L1181.4 770.6M1177 774.6L1178.2 773.4M1182.6 774.6L1181.4 773.4" />
</g>
</svg>
<div style="left:47.2px;top:694.3px;font-size:6.5px;color:#222;white-space:nowrap">Blank Canvas</div>
<div style="left:-5.2px;top:735.0px;width:40px;text-align:center;font-size:6.5px;color:#c0c0c0">Slice</div>
<div style="left:24.6px;top:735.0px;width:40px;text-align:center;font-size:6.5px;color:#c0c0c0">Weld</div>
<div style="left:56.7px;top:735.0px;width:40px;text-align:center;font-size:6.5px;color:#c0c0c0">Attach</div>
<div style="left:91.4px;top:735.0px;width:40px;text-align:center;font-size:6.5px;color:#c0c0c0">Flatten</div>
<div style="left:128.5px;top:735.0px;width:40px;text-align:center;font-size:6.5px;color:#c0c0c0">Contour</div>
</div>
</div>
<div class="abs" style="left:0;top:771px;width:1px;height:26px;background:#8db6b4"></div>
<div class="abs" style="left:0;top:796px;width:1200px;height:1px;background:#8f9a9a"></div>
</body>
</html>
